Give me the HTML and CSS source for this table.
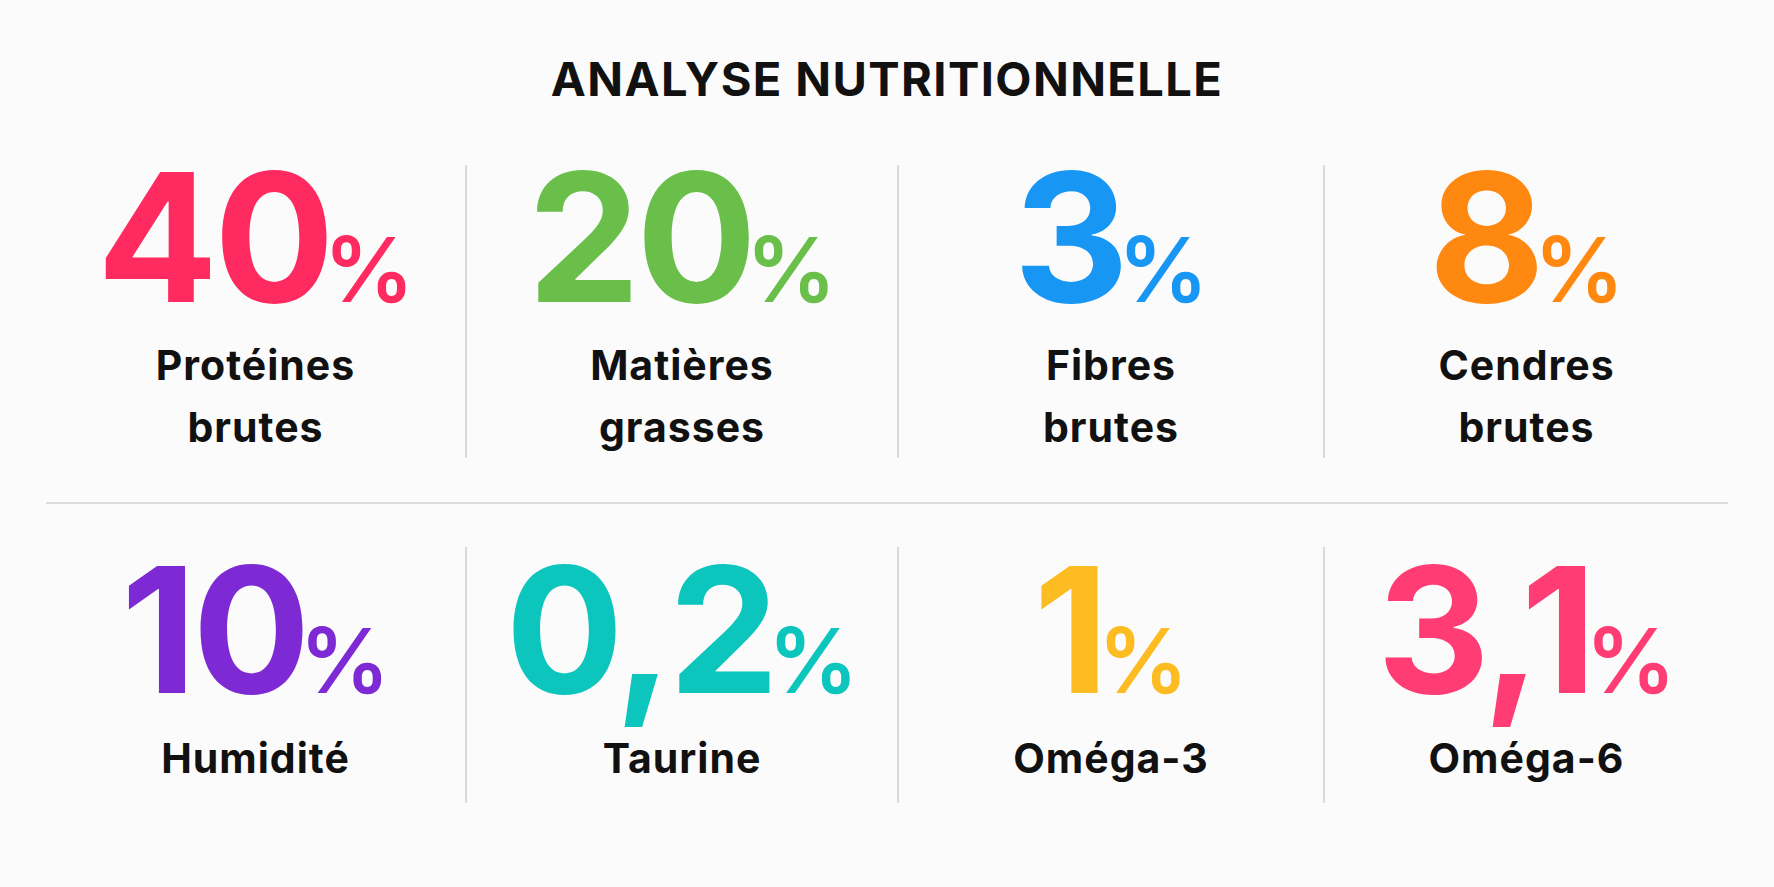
FILE: index.html
```html
<!DOCTYPE html>
<html lang="fr">
<head>
<meta charset="utf-8">
<title>Analyse nutritionnelle</title>
<link rel="stylesheet" href="styles.css">
</head>
<body>
<main class="panel">
  <h1 class="title">ANALYSE NUTRITIONNELLE</h1>

  <section class="row row-top">
    <div class="cell">
      <div class="num c-red">40<span class="pct">%</span></div>
      <div class="label">Protéines<br>brutes</div>
    </div>
    <div class="cell">
      <div class="num c-green">20<span class="pct">%</span></div>
      <div class="label">Matières<br>grasses</div>
    </div>
    <div class="cell">
      <div class="num c-blue">3<span class="pct">%</span></div>
      <div class="label">Fibres<br>brutes</div>
    </div>
    <div class="cell">
      <div class="num c-orange">8<span class="pct">%</span></div>
      <div class="label">Cendres<br>brutes</div>
    </div>
  </section>

  <hr class="sep">

  <section class="row row-bottom">
    <div class="cell">
      <div class="num c-purple">10<span class="pct">%</span></div>
      <div class="label">Humidité</div>
    </div>
    <div class="cell">
      <div class="num c-teal">0,2<span class="pct">%</span></div>
      <div class="label">Taurine</div>
    </div>
    <div class="cell">
      <div class="num c-yellow">1<span class="pct">%</span></div>
      <div class="label">Oméga-3</div>
    </div>
    <div class="cell">
      <div class="num c-pink">3,1<span class="pct">%</span></div>
      <div class="label">Oméga-6</div>
    </div>
  </section>
</main>
</body>
</html>
```
FILE: styles.css
```css
* { box-sizing: border-box; }

html, body {
  margin: 0;
  padding: 0;
  background: #fbfbfb;
}

body {
  font-family: "Inter", "Noto Sans", "Liberation Sans", sans-serif;
  color: #111111;
  width: 1774px;
  height: 887px;
  overflow: hidden;
}

.panel {
  padding: 0 46px;
}

.title {
  margin: 55px 0 0;
  font-size: 47px;
  line-height: 1;
  font-weight: 700;
  text-align: center;
  letter-spacing: 1.4px;
  color: #111111;
}

.row {
  display: grid;
  grid-template-columns: 419fr 432fr 426fr 405fr;
}

.row-top {
  margin-top: 63px;
  height: 290px;
}

.row-bottom {
  height: 256px;
}

.cell {
  text-align: center;
}

.cell + .cell {
  border-left: 2px solid #d9d9d9;
}

.num {
  font-size: 179px;
  line-height: 0.8;
  font-weight: 700;
  letter-spacing: -4px;
  white-space: nowrap;
}

.pct {
  font-size: 90px;
  font-weight: 600;
  letter-spacing: 0;
  margin-left: -7px;
}

.row-top .num {
  padding-top: 1px;
}

.row-bottom .num {
  font-size: 175px;
  padding-top: 12px;
}

.label {
  font-size: 41px;
  line-height: 62px;
  font-weight: 700;
  letter-spacing: 1px;
}

.row-top .label {
  margin-top: 25px;
}

.row-bottom .label {
  margin-top: 28px;
}

.sep {
  margin: 47px 0 43px;
  border: 0;
  height: 2px;
  background: #dcdcdc;
}

.c-red { color: #ff2a5f; }
.c-green { color: #6abf4b; }
.c-blue { color: #1796f4; }
.c-orange { color: #ff8810; }
.c-purple { color: #7d2ad4; }
.c-teal { color: #0cc5bd; }
.c-yellow { color: #fdbc21; }
.c-pink { color: #ff3c74; }
```
